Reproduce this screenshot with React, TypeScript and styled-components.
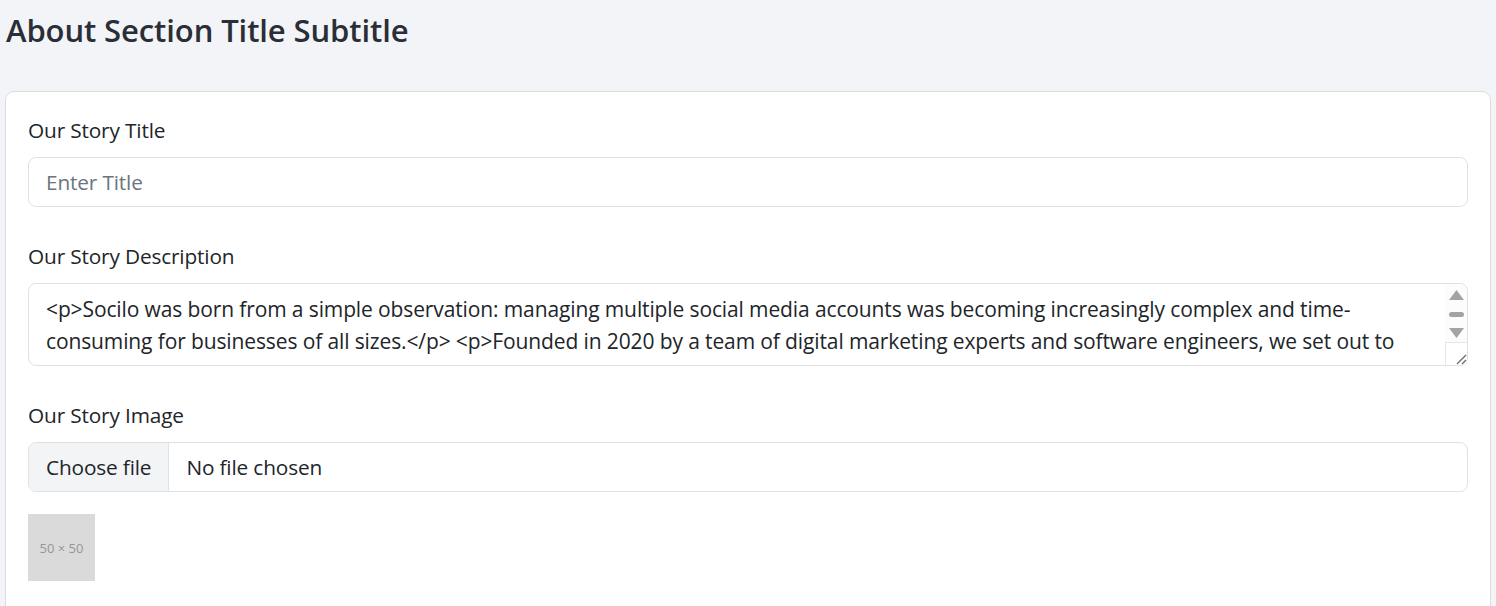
import React from "react";
import styled, { createGlobalStyle } from "styled-components";

const Global = createGlobalStyle`
  * { box-sizing: border-box; }
  body {
    margin: 0;
    background: #f3f4f8;
    font-family: "Open Sans", "Noto Sans", sans-serif;
    color: #212529;
  }
`;

const Page = styled.div`
  padding: 0 5px;
  height: 606px;
  overflow: hidden;
`;

const Heading = styled.h4`
  margin: 0;
  padding: 9px 0 0 1px;
  height: 91px;
  font-size: 31px;
  font-weight: 600;
  line-height: 42px;
  color: #2a2e36;
  letter-spacing: -0.1px;
`;

const Card = styled.div`
  background: #fff;
  border: 1px solid #dcdcdc;
  border-radius: 9px;
  padding: 22px 22px 40px;
  min-height: 600px;
`;

const Field = styled.div<{ $gap?: number }>`
  margin-bottom: ${(p) => p.$gap ?? 33}px;
`;

const Label = styled.label`
  display: block;
  font-size: 20.8px;
  line-height: 32px;
  margin-bottom: 11px;
  color: #212529;
  letter-spacing: -0.15px;
`;

const Input = styled.input`
  display: block;
  width: 100%;
  height: 50px;
  border: 1px solid #dee2e6;
  border-radius: 8px;
  padding: 0 17px;
  font-family: inherit;
  font-size: 20.8px;
  color: #212529;
  outline: none;
  letter-spacing: -0.15px;
  &::placeholder { color: #6c757d; }
`;

const AreaWrap = styled.div`
  position: relative;
`;

const TextArea = styled.textarea`
  display: block;
  width: 100%;
  height: 83px;
  border: 1px solid #dee2e6;
  border-radius: 8px;
  padding: 9px 40px 8px 17px;
  font-family: inherit;
  font-size: 21px;
  line-height: 32px;
  color: #212529;
  resize: none;
  overflow: hidden;
  outline: none;
  letter-spacing: -0.12px;
`;

const ScrollTrack = styled.div`
  position: absolute;
  top: 1px;
  right: 1px;
  bottom: 1px;
  width: 22px;
  background: #fcfcfc;
  border-radius: 0 7px 7px 0;
  display: flex;
  flex-direction: column;
`;

const ScrollArrows = styled.div`
  flex: 1;
  display: flex;
  flex-direction: column;
  align-items: center;
  justify-content: space-between;
  padding: 6px 0 4px;
`;

const Resizer = styled.div`
  height: 23px;
  border-top: 1px solid #e6e6e6;
  border-left: 1px solid #e6e6e6;
  background: #fff;
  display: flex;
  align-items: flex-end;
  justify-content: flex-end;
  border-bottom-right-radius: 7px;
`;

const FileBox = styled.label`
  display: flex;
  align-items: stretch;
  width: 100%;
  height: 50px;
  border: 1px solid #dee2e6;
  border-radius: 8px;
  overflow: hidden;
  font-size: 20.8px;
  color: #212529;
  letter-spacing: -0.15px;
  cursor: pointer;
  input { display: none; }
`;

const FileButton = styled.span`
  display: flex;
  align-items: center;
  padding: 0 17px;
  background: #f3f4f6;
  border-right: 1px solid #dee2e6;
`;

const FileName = styled.span`
  display: flex;
  align-items: center;
  padding: 0 17px;
`;

const Thumb = styled.div`
  margin-top: 22px;
  width: 67px;
  height: 67px;
  background: #dadada;
  color: #969696;
  font-size: 13px;
  display: flex;
  align-items: center;
  justify-content: center;
`;

const storyText =
  "<p>Socilo was born from a simple observation: managing multiple social media accounts was becoming increasingly complex and time-consuming for businesses of all sizes.</p> <p>Founded in 2020 by a team of digital marketing experts and software engineers, we set out to create a platform that would simplify social media management without sacrificing powerful features.</p>";

export default function App() {
  return (
    <>
      <Global />
      <Page>
        <Heading>About Section Title Subtitle</Heading>
        <Card>
          <Field>
            <Label>Our Story Title</Label>
            <Input placeholder="Enter Title" />
          </Field>
          <Field>
            <Label>Our Story Description</Label>
            <AreaWrap>
              <TextArea defaultValue={storyText} rows={2} />
              <ScrollTrack>
                <ScrollArrows>
                  <svg width="15" height="10" viewBox="0 0 15 10">
                    <path d="M7.5 0 L15 10 L0 10 Z" fill="#a3a3a3" />
                  </svg>
                  <svg width="15" height="5" viewBox="0 0 15 5">
                    <rect x="0" y="0" width="15" height="5" rx="2.5" fill="#a3a3a3" />
                  </svg>
                  <svg width="15" height="10" viewBox="0 0 15 10">
                    <path d="M0 0 L15 0 L7.5 10 Z" fill="#a3a3a3" />
                  </svg>
                </ScrollArrows>
                <Resizer>
                  <svg width="14" height="14" viewBox="0 0 14 14">
                    <path d="M13 4 L4 13 M13 9 L9 13" stroke="#6a6a6a" strokeWidth="1.3" />
                  </svg>
                </Resizer>
              </ScrollTrack>
            </AreaWrap>
          </Field>
          <Field $gap={0}>
            <Label>Our Story Image</Label>
            <FileBox>
              <input type="file" />
              <FileButton>Choose file</FileButton>
              <FileName>No file chosen</FileName>
            </FileBox>
          </Field>
          <Thumb>50 × 50</Thumb>
        </Card>
      </Page>
    </>
  );
}
